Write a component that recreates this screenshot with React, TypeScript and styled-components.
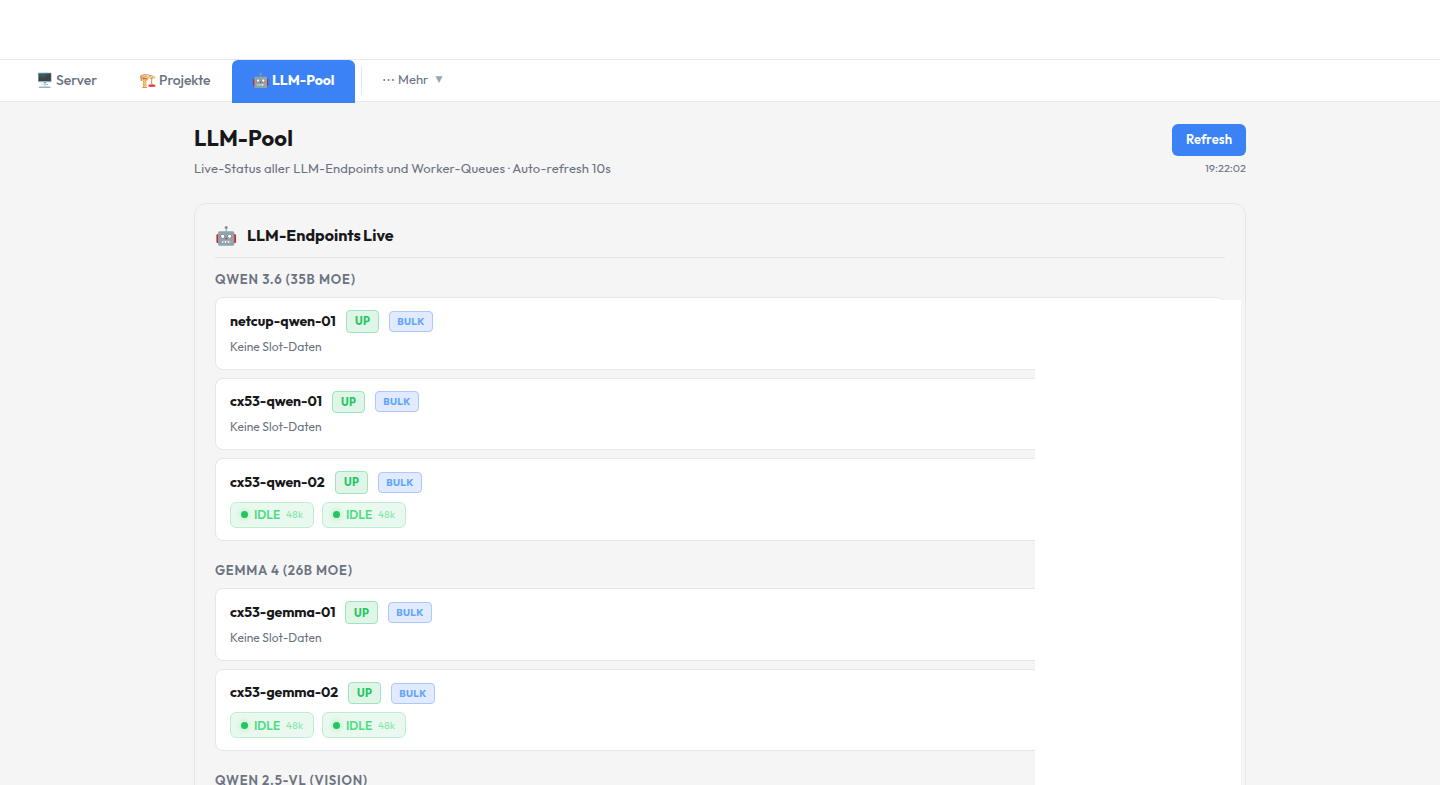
import React from 'react';
import styled, { createGlobalStyle } from 'styled-components';

const Global = createGlobalStyle`
  * { box-sizing: border-box; }
  html, body { margin: 0; height: 785px; overflow: hidden; background: #f5f5f5; }
  body { font-family: Outfit, Lato, sans-serif; color: #18181b; }
`;

const Page = styled.div`
  height: 785px;
  overflow: hidden;
  background: #f5f5f5;
`;
const TopBar = styled.div`
  height: 60px;
  background: #fff;
  border-bottom: 1px solid #e5e7eb;
`;
const Nav = styled.nav`
  display: flex;
  height: 42px;
  padding-left: 16px;
  background: #fff;
  border-bottom: 1px solid #e5e7eb;
`;
/* A single line of text with a reserved width and its own tracking. */
const Label = styled.span<{ $w?: number; $ls?: number; $ws?: number }>`
  display: block;
  flex: none;
  white-space: nowrap;
  width: ${p => (p.$w ? `${p.$w}px` : 'auto')};
  letter-spacing: ${p => p.$ls ?? 0}px;
  word-spacing: ${p => p.$ws ?? 0}px;
`;
const Tab = styled.a<{ $w: number; $active?: boolean }>`
  display: flex;
  align-items: center;
  flex: none;
  gap: 3px;
  width: ${p => p.$w}px;
  height: ${p => (p.$active ? 43 : 41)}px;
  padding: ${p => (p.$active ? '0 0 3px 20px' : '0 0 1px 20px')};
  border-radius: 6px 6px 0 0;
  font-size: 14px;
  font-weight: ${p => (p.$active ? 700 : 500)};
  color: ${p => (p.$active ? '#fff' : '#6b7280')};
  background: ${p => (p.$active ? '#3b82f6' : 'transparent')};
`;
const Emoji = styled.span<{ $size: number; $w: number }>`
  display: block;
  flex: none;
  width: ${p => p.$w}px;
  font-size: ${p => p.$size}px;
  line-height: 1.2;
  white-space: nowrap;
`;
const Divider = styled.div`
  width: 1px;
  height: 29px;
  margin: 6px 20px 0 6px;
  background: #e5e7eb;
`;
const More = styled.div`
  display: flex;
  align-items: center;
  gap: 3px;
  height: 38px;
  font-size: 13px;
  font-weight: 400;
  color: #6b7280;
`;
const Caret = styled.span`
  margin-left: 4px;
  font: 9px 'DejaVu Sans', sans-serif;
  color: #9ca3af;
`;
const Main = styled.main`
  width: 1052px;
  margin: 0 auto;
  padding-top: 22px;
`;
const Head = styled.header`
  display: flex;
  justify-content: space-between;
  height: 79px;
`;
const Title = styled.h1`
  margin: 0;
  height: 30px;
  line-height: 28px;
  font-size: 22px;
  font-weight: 700;
`;
const Subtitle = styled.p`
  margin: 5px 0 0;
  line-height: 18px;
  font-size: 13px;
  color: #6b7280;
`;
const Actions = styled.div`
  display: flex;
  flex-direction: column;
  align-items: flex-end;
`;
const Refresh = styled.button`
  display: flex;
  align-items: center;
  width: 74px;
  height: 32px;
  padding: 0 0 2px 14px;
  border: 0;
  border-radius: 6px;
  background: #3b82f6;
  color: #fff;
  font: 600 13px Outfit, Lato, sans-serif;
`;
const Time = styled.div`
  margin-top: 5px;
  line-height: 14px;
  font-size: 11px;
  color: #6b7280;
`;
const Panel = styled.section`
  position: relative;
  height: 700px;
  padding: 20px;
  border: 1px solid #e5e7eb;
  border-radius: 12px;
`;
const PanelTitle = styled.h2`
  display: flex;
  align-items: center;
  gap: 9px;
  height: 34px;
  margin: 0 0 10px;
  padding-bottom: 11px;
  border-bottom: 1px solid #e2e4e8;
  font-size: 16px;
  font-weight: 700;

  ${Emoji} { padding-top: 1px; }
`;
const GroupTitle = styled.h3`
  margin: 0;
  height: 29px;
  padding-top: 3px;
  line-height: 16px;
  font-size: 13px;
  font-weight: 600;
  color: #6b7280;
`;
const Group = styled.div<{ $gap: number }>`
  margin-bottom: ${p => p.$gap}px;
`;
const Stack = styled.div`
  display: flex;
  flex-direction: column;
  gap: 8px;
`;
const Card = styled.article<{ $slots: boolean }>`
  height: ${p => (p.$slots ? 82.5 : 72.5)}px;
  padding: 12px 14px;
  background: #fff;
  border: 1px solid #e5e7eb;
  border-radius: 8px;
`;
const CardHead = styled.div`
  display: flex;
  align-items: center;
  gap: 10px;
  height: 22.5px;
  font-size: 14px;
  font-weight: 700;
`;
const Name = styled(Label)`
  margin-bottom: 1.4px;
`;
const Badge = styled.span<{ $kind: 'up' | 'bulk' }>`
  display: flex;
  align-items: center;
  justify-content: center;
  flex: none;
  width: ${p => (p.$kind === 'up' ? 33 : 44)}px;
  height: ${p => (p.$kind === 'up' ? 22.5 : 21)}px;
  border: 1px solid ${p => (p.$kind === 'up' ? '#a0e5b9' : '#acc9fb')};
  border-radius: 4px;
  background: ${p => (p.$kind === 'up' ? '#def5e7' : '#e1eafe')};
  color: ${p => (p.$kind === 'up' ? '#22c55e' : '#60a5fa')};
  font-size: ${p => (p.$kind === 'up' ? 11 : 10)}px;
  font-weight: 700;
`;
const Empty = styled.div`
  margin-top: 6px;
  line-height: 16px;
  font-size: 12px;
  color: #6b7280;
`;
const Slots = styled.div`
  display: flex;
  gap: 8px;
  margin-top: 8px;
`;
const Slot = styled.div`
  display: flex;
  align-items: center;
  gap: 6px;
  width: 84px;
  height: 26px;
  padding-left: 10px;
  border: 1px solid #bdeecf;
  border-radius: 6px;
  background: #e9f9ef;
  color: #4ade80;
  font-size: 12px;
  font-weight: 600;
`;
const Dot = styled.i`
  flex: none;
  width: 7px;
  height: 7px;
  border-radius: 50%;
  background: #22c55e;
  box-shadow: 0 0 6px rgba(34, 197, 94, 0.4);
`;
const Ctx = styled.span`
  font-size: 10px;
  font-weight: 400;
  letter-spacing: 0.2px;
  color: #86e5a8;
`;
/* Blank surface that lies over the right side of the cards. */
const Cover = styled.div`
  position: absolute;
  top: 96px;
  right: 4px;
  width: 206px;
  height: 600px;
  background: #fff;
`;

type Endpoint = { name: string; w: number; slots?: string[] };
type GroupData = { title: string; ls: number; gap: number; items: Endpoint[] };

const groups: GroupData[] = [
  {
    title: 'QWEN 3.6 (35B MOE)',
    ls: 0.83,
    gap: 18.9,
    items: [
      { name: 'netcup-qwen-01', w: 106 },
      { name: 'cx53-qwen-01', w: 92 },
      { name: 'cx53-qwen-02', w: 95, slots: ['48k', '48k'] },
    ],
  },
  {
    title: 'GEMMA 4 (26B MOE)',
    ls: 0.76,
    gap: 17.6,
    items: [
      { name: 'cx53-gemma-01', w: 105 },
      { name: 'cx53-gemma-02', w: 108, slots: ['48k', '48k'] },
    ],
  },
  { title: 'QWEN 2.5-VL (VISION)', ls: 0.8, gap: 0, items: [] },
];

function EndpointCard({ name, w, slots }: Endpoint) {
  return (
    <Card $slots={!!slots}>
      <CardHead>
        <Name $w={w} $ls={-0.07}>{name}</Name>
        <Badge $kind="up"><Label $ls={0.3}>UP</Label></Badge>
        <Badge $kind="bulk"><Label $ls={0.3}>BULK</Label></Badge>
      </CardHead>
      {slots ? (
        <Slots>
          {slots.map((s, i) => (
            <Slot key={i}>
              <Dot />
              <Label $w={26}>IDLE</Label>
              <Ctx>{s}</Ctx>
            </Slot>
          ))}
        </Slots>
      ) : (
        <Empty><Label $ls={0.06}>Keine Slot-Daten</Label></Empty>
      )}
    </Card>
  );
}

export default function App() {
  return (
    <Page>
      <Global />
      <TopBar />
      <Nav>
        <Tab $w={103}><Emoji $size={14} $w={17}>🖥️</Emoji><Label>Server</Label></Tab>
        <Tab $w={113}><Emoji $size={14} $w={17}>🏗️</Emoji><Label $ls={-0.08}>Projekte</Label></Tab>
        <Tab $w={123} $active><Emoji $size={14} $w={17}>🤖</Emoji><Label>LLM-Pool</Label></Tab>
        <Divider />
        <More><Label $w={13}>⋯</Label><Label>Mehr</Label><Caret>▼</Caret></More>
      </Nav>
      <Main>
        <Head>
          <div>
            <Title><Label $ls={0.1}>LLM-Pool</Label></Title>
            <Subtitle><Label $ls={0.14}>Live-Status aller LLM-Endpoints und Worker-Queues · Auto-refresh 10s</Label></Subtitle>
          </div>
          <Actions>
            <Refresh><Label $ls={0.1}>Refresh</Label></Refresh>
            <Time><Label>19:22:02</Label></Time>
          </Actions>
        </Head>
        <Panel>
          <PanelTitle>
            <Emoji $size={18} $w={23}>🤖</Emoji>
            <Label $ls={0.07} $ws={-1}>LLM-Endpoints Live</Label>
          </PanelTitle>
          {groups.map(g => (
            <Group key={g.title} $gap={g.gap}>
              <GroupTitle><Label $ls={g.ls}>{g.title}</Label></GroupTitle>
              <Stack>{g.items.map(e => <EndpointCard key={e.name} {...e} />)}</Stack>
            </Group>
          ))}
          <Cover />
        </Panel>
      </Main>
    </Page>
  );
}
